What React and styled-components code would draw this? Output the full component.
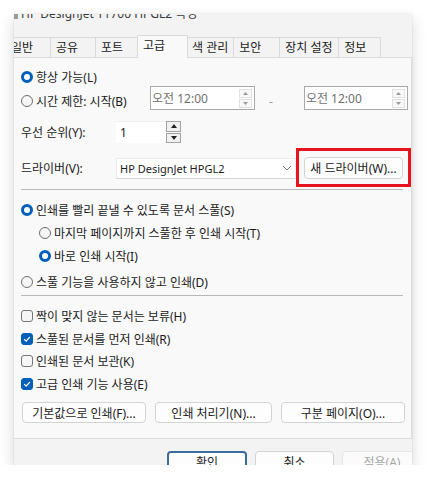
import React from 'react';
import styled, { createGlobalStyle } from 'styled-components';

const GlobalStyle = createGlobalStyle`
  body {
    margin: 0;
    background: #fff;
    font-family: "Noto Sans", "Noto Sans CJK KR", sans-serif;
    font-size: 12px;
    color: #1b1b1b;
  }
`;

const Window = styled.div`
  margin: 14px 0 0 14px;
  width: 398px;
  height: 451px;
  background: #f3f3f3;
  box-shadow: 0 6px 14px rgba(0, 0, 0, 0.16), 0 0 2px rgba(0, 0, 0, 0.1);
  overflow: hidden;
  display: flex;
  flex-direction: column;
`;

const TitleBar = styled.div`
  height: 21px;
  flex-shrink: 0;
  overflow: hidden;
  display: flex;
  align-items: flex-start;
  gap: 3px;
`;

const TitleIcon = styled.span`
  width: 4px;
  height: 5px;
  background: #9a9a9a;
`;

const TitleText = styled.span`
  margin-top: -8px;
  font-size: 12px;
  line-height: 16px;
  color: #3a3a3a;
  white-space: nowrap;
`;

const TabStrip = styled.div`
  height: 22px;
  flex-shrink: 0;
  display: flex;
  align-items: flex-end;
  margin-left: -9px;
`;

const Tab = styled.div`
  box-sizing: border-box;
  flex: 0 0 ${p => p.$w}px;
  height: ${p => (p.$active ? 23 : 20)}px;
  padding: 0 5px ${p => (p.$active ? 5 : 1)}px;
  margin: 0 ${p => (p.$active ? -2 : -1)}px ${p => (p.$active ? -1 : 0)}px ${p => (p.$active ? -2 : 0)}px;
  display: flex;
  align-items: center;
  border: 1px solid #dadada;
  border-bottom: none;
  background: ${p => (p.$active ? '#f9f9f9' : '#f3f3f3')};
  position: relative;
  z-index: ${p => (p.$active ? 2 : 1)};
  white-space: nowrap;
`;

const Panel = styled.div`
  box-sizing: border-box;
  height: 382px;
  flex-shrink: 0;
  border: 1px solid #dcdcdc;
  border-left: none;
  background: #f9f9f9;
  padding: 8px 8px 0 7px;
  display: flex;
  flex-direction: column;
`;

const Row = styled.div`
  display: flex;
  align-items: center;
  height: ${p => p.$h || 22}px;
  margin-top: ${p => p.$mt || 0}px;
  padding-left: ${p => p.$indent || 0}px;
  flex-shrink: 0;
`;

const Label = styled.span`
  white-space: nowrap;
  width: ${p => (p.$w ? `${p.$w}px` : 'auto')};
  padding-top: ${p => p.$pt || 0}px;
  flex-shrink: 0;
  display: inline-flex;
  align-items: center;
`;

const RadioDot = styled.span`
  box-sizing: border-box;
  width: 12px;
  height: 12px;
  border-radius: 50%;
  flex-shrink: 0;
  margin-right: 3px;
  border: ${p => (p.$on ? '3.5px solid #005fb8' : '1px solid #6f6f6f')};
  background: ${p => (p.$on ? '#fff' : '#f6f6f6')};
`;

const CheckBox = styled.span`
  box-sizing: border-box;
  width: 12px;
  height: 12px;
  border-radius: 3px;
  flex-shrink: 0;
  margin-right: 3px;
  display: flex;
  align-items: center;
  justify-content: center;
  border: 1px solid ${p => (p.$on ? '#005fb8' : '#767676')};
  background: ${p => (p.$on ? '#005fb8' : '#f6f6f6')};
`;

const Separator = styled.div`
  height: 1px;
  background: #b9b9b9;
  margin: ${p => p.$mt}px 0 0 0;
  flex-shrink: 0;
`;

const TimeSpin = styled.div`
  box-sizing: border-box;
  width: ${p => p.$w}px;
  height: 24px;
  border: 1px solid #a9a9a9;
  background: #fff;
  display: flex;
  align-items: center;
  justify-content: space-between;
  padding: 0 2px 0 1px;
  color: #707070;
  flex-shrink: 0;
`;

const SpinCol = styled.div`
  display: flex;
  flex-direction: column;
  gap: 1px;
`;

const SpinBtn = styled.span`
  box-sizing: border-box;
  width: ${p => (p.$dark ? 15 : 13)}px;
  height: ${p => (p.$dark ? 11 : 9)}px;
  border: 1px solid ${p => (p.$dark ? '#a3a3a3' : '#e1e1e1')};
  background: ${p => (p.$dark ? '#f0f0f0' : '#f8f8f8')};
  display: flex;
  align-items: center;
  justify-content: center;
`;

const Dash = styled.span`
  color: #9a9a9a;
  margin: 0 31px 0 14px;
  padding-top: 6px;
`;

const NumSpin = styled.div`
  display: flex;
  align-items: stretch;
  height: 22px;
`;

const NumField = styled.div`
  width: 46px;
  background: #fff;
  border-top: 1px solid #f0f0f0;
  display: flex;
  align-items: center;
  padding-left: 4px;
`;

const Combo = styled.div`
  box-sizing: border-box;
  width: 181px;
  height: 21px;
  background: #fff;
  border: 1px solid #ececec;
  border-bottom-color: #d6d6d6;
  display: flex;
  align-items: center;
  justify-content: space-between;
  padding: 0 3px;
  font-size: 11px;
`;

const Highlight = styled.div`
  position: relative;
  margin-left: 8px;
`;

const RedBox = styled.div`
  position: absolute;
  left: -8px;
  top: -9px;
  width: 115px;
  height: 39px;
  box-sizing: border-box;
  border: 3px solid #e5141f;
  pointer-events: none;
`;

const Button = styled.button`
  box-sizing: border-box;
  width: ${p => p.$w}px;
  height: ${p => p.$h || 22}px;
  margin: 0;
  padding: 0;
  font: inherit;
  color: ${p => (p.$disabled ? '#a6a6a6' : '#1b1b1b')};
  background: ${p => (p.$disabled ? '#fbfbfb' : '#fdfdfd')};
  border: ${p => (p.$primary ? '2px solid #3d6a99' : `1px solid ${p.$disabled ? '#e6e6e6' : '#d3d3d3'}`)};
  border-radius: 4px;
  flex-shrink: 0;
  display: flex;
  align-items: center;
  justify-content: center;
  white-space: nowrap;
`;

const ButtonRow = styled.div`
  display: flex;
  gap: 9px;
  margin: 7px 0 0 1px;
`;

const Footer = styled.div`
  flex: 1;
  display: flex;
  gap: 8px;
  padding: 12px 0 0 153px;
`;

const Tri = ({ up, color, w = 5, h = 3 }) => (
  <svg width={w} height={h} viewBox={`0 0 ${w} ${h}`}>
    <path d={up ? `M0 ${h}L${w / 2} 0L${w} ${h}Z` : `M0 0L${w} 0L${w / 2} ${h}Z`} fill={color} />
  </svg>
);

const Radio = ({ on, children }) => (
  <Label>
    <RadioDot $on={on} />
    {children}
  </Label>
);

const Check = ({ on, children }) => (
  <Label>
    <CheckBox $on={on}>
      {on && (
        <svg width="10" height="10" viewBox="0 0 10 10">
          <path d="M2.2 5.2L4.1 7.1L7.9 3" fill="none" stroke="#fff" strokeWidth="1.2" />
        </svg>
      )}
    </CheckBox>
    {children}
  </Label>
);

const Time = ({ w }) => (
  <TimeSpin $w={w}>
    <span>오전 12:00</span>
    <SpinCol>
      <SpinBtn><Tri up color="#9a9a9a" /></SpinBtn>
      <SpinBtn><Tri color="#9a9a9a" /></SpinBtn>
    </SpinCol>
  </TimeSpin>
);

const tabs = [
  { label: '일반', w: 46 },
  { label: '공유', w: 46 },
  { label: '포트', w: 45 },
  { label: '고급', w: 51, active: true },
  { label: '색 관리', w: 47 },
  { label: '보안', w: 47 },
  { label: '장치 설정', w: 60 },
  { label: '정보', w: 43 },
];

export default function App() {
  return (
    <>
      <GlobalStyle />
      <Window>
        <TitleBar>
          <TitleIcon />
          <TitleText>HP DesignJet T1700 HPGL2 속성</TitleText>
        </TitleBar>
        <TabStrip>
          {tabs.map(t => (
            <Tab key={t.label} $w={t.w} $active={t.active}>{t.label}</Tab>
          ))}
        </TabStrip>
        <Panel>
          <Row>
            <Radio on>항상 가능(L)</Radio>
          </Row>
          <Row $h={24} $mt={-2}>
            <Label $w={129} $pt={6}>
              <RadioDot />시간 제한: 시작(B)
            </Label>
            <Time w={105} />
            <Dash>-</Dash>
            <Time w={104} />
          </Row>
          <Row $mt={11}>
            <Label $w={95}>우선 순위(Y):</Label>
            <NumSpin>
              <NumField>1</NumField>
              <SpinCol>
                <SpinBtn $dark><Tri up color="#222" w={6} h={4} /></SpinBtn>
                <SpinBtn $dark><Tri color="#222" w={6} h={4} /></SpinBtn>
              </SpinCol>
            </NumSpin>
          </Row>
          <Row $mt={14}>
            <Label $w={95}>드라이버(V):</Label>
            <Combo>
              <span>HP DesignJet HPGL2</span>
              <svg width="10" height="6" viewBox="0 0 10 6">
                <path d="M1 1L5 5L9 1" fill="none" stroke="#777" strokeWidth="1" />
              </svg>
            </Combo>
            <Highlight>
              <Button $w={99}>새 드라이버(W)...</Button>
              <RedBox />
            </Highlight>
          </Row>
          <Separator $mt={10} />
          <Row $h={23} $mt={8}>
            <Radio on>인쇄를 빨리 끝낼 수 있도록 문서 스풀(S)</Radio>
          </Row>
          <Row $h={23} $indent={18}>
            <Radio>마지막 페이지까지 스풀한 후 인쇄 시작(T)</Radio>
          </Row>
          <Row $h={23} $indent={18}>
            <Radio on>바로 인쇄 시작(I)</Radio>
          </Row>
          <Row $h={23} $mt={3}>
            <Radio>스풀 기능을 사용하지 않고 인쇄(D)</Radio>
          </Row>
          <Separator $mt={2} />
          <Row $h={22.5} $mt={9}>
            <Check>짝이 맞지 않는 문서는 보류(H)</Check>
          </Row>
          <Row $h={22.5}>
            <Check on>스풀된 문서를 먼저 인쇄(R)</Check>
          </Row>
          <Row $h={22.5}>
            <Check>인쇄된 문서 보관(K)</Check>
          </Row>
          <Row $h={22.5}>
            <Check on>고급 인쇄 기능 사용(E)</Check>
          </Row>
          <ButtonRow>
            <Button $w={124} $h={21}>기본값으로 인쇄(F)...</Button>
            <Button $w={117} $h={21}>인쇄 처리기(N)...</Button>
            <Button $w={124} $h={21}>구분 페이지(O)...</Button>
          </ButtonRow>
        </Panel>
        <Footer>
          <Button $w={80} $primary>확인</Button>
          <Button $w={79}>취소</Button>
          <Button $w={80} $disabled>적용(A)</Button>
        </Footer>
      </Window>
    </>
  );
}
